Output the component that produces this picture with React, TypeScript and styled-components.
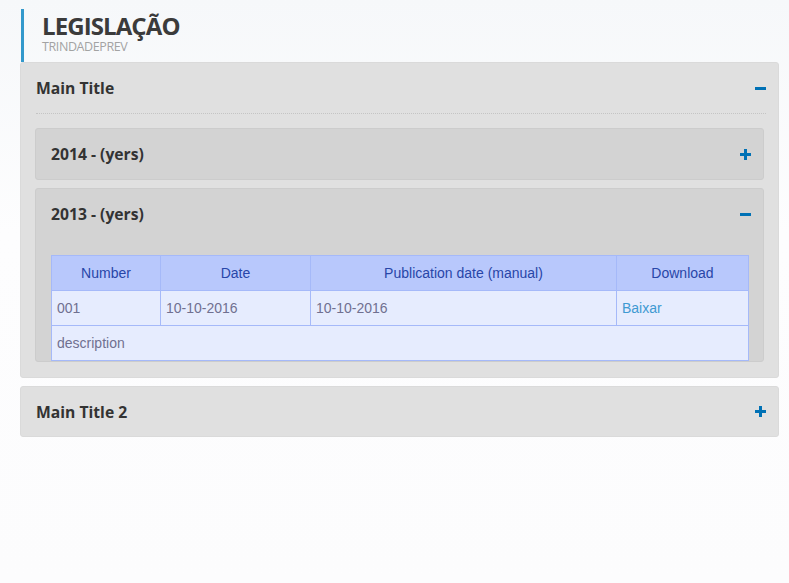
import * as React from "react";
import styled, { createGlobalStyle } from "styled-components";

const GlobalStyle = createGlobalStyle`
  html, body {
    margin: 0;
    padding: 0;
    background: #fbfcfd;
  }
  body {
    font-family: "Open Sans", "Liberation Sans", sans-serif;
  }
`;

const Page = styled.div`
  min-height: 583px;
  padding: 9px 10px 20px 20px;
  box-sizing: border-box;
  background: linear-gradient(180deg, #f6f8fa 0%, #fdfdfe 40%, #fcfcfd 100%);
`;

const PageHeader = styled.div`
  margin-left: 1px;
  border-left: 3px solid #3399cc;
  height: 53px;
  padding: 5px 0 0 18px;
  box-sizing: border-box;
`;

const PageTitle = styled.h1`
  margin: 0;
  font-family: "Open Sans", sans-serif;
  font-weight: 700;
  font-size: 24px;
  line-height: 24px;
  letter-spacing: -0.9px;
  color: #3b3b3b;
`;

const PageSub = styled.div`
  margin-top: 2px;
  font-size: 12.5px;
  line-height: 13px;
  color: #a3a3a3;
  letter-spacing: -0.4px;
`;

const Panel = styled.div<{ $inner?: boolean }>`
  background: ${(p) => (p.$inner ? "#d3d3d3" : "#e0e0e0")};
  border: 1px solid ${(p) => (p.$inner ? "#cccccc" : "#dadada")};
  border-radius: 3px;
  margin-bottom: 8px;
  &:last-child {
    margin-bottom: 0;
  }
`;

const PanelHead = styled.div<{ $divider?: boolean; $h: number }>`
  display: flex;
  align-items: center;
  justify-content: space-between;
  height: ${(p) => p.$h}px;
  margin: 0 12px 0 15px;
  border-bottom: ${(p) => (p.$divider ? "1px dotted #c4c4c4" : "none")};
  box-sizing: border-box;
`;

const PanelTitle = styled.span`
  font-weight: 700;
  font-size: 15.7px;
  color: #333333;
`;

const PanelBody = styled.div<{ $pad: string }>`
  padding: ${(p) => p.$pad};
`;

const ToggleBox = styled.span`
  position: relative;
  width: 11px;
  height: 11px;
  display: inline-block;
`;

const Bar = styled.span<{ $vertical?: boolean }>`
  position: absolute;
  background: #0071b5;
  ${(p) =>
    p.$vertical
      ? "left: 4px; top: 0; width: 3px; height: 11px;"
      : "left: 0; top: 4px; width: 11px; height: 3px;"}
`;

const Toggle: React.FC<{ open: boolean }> = ({ open }) => (
  <ToggleBox>
    <Bar />
    {!open && <Bar $vertical />}
  </ToggleBox>
);

const Table = styled.table`
  width: 100%;
  border-collapse: collapse;
  table-layout: fixed;
  font-family: "Liberation Sans", Arial, sans-serif;
  font-size: 14px;
`;

const Th = styled.th`
  background: #b8c8fc;
  border: 1px solid #a5b9f9;
  color: #2846a8;
  font-weight: 400;
  height: 35px;
  padding: 0 5px;
  box-sizing: border-box;
`;

const Td = styled.td`
  background: #e6ecfe;
  border: 1px solid #a5b9f9;
  color: #707090;
  height: 35px;
  padding: 0 5px;
  box-sizing: border-box;
`;

const Link = styled.a`
  color: #3f9ad2;
  text-decoration: none;
`;

export default function App() {
  return (
    <>
      <GlobalStyle />
      <Page>
        <PageHeader>
          <PageTitle>LEGISLAÇÃO</PageTitle>
          <PageSub>TRINDADEPREV</PageSub>
        </PageHeader>

        <Panel>
          <PanelHead $divider $h={51}>
            <PanelTitle>Main Title</PanelTitle>
            <Toggle open />
          </PanelHead>
          <PanelBody $pad="14px 14px 15px 14px">
            <Panel $inner>
              <PanelHead $h={50}>
                <PanelTitle>2014 - (yers)</PanelTitle>
                <Toggle open={false} />
              </PanelHead>
            </Panel>
            <Panel $inner>
              <PanelHead $h={50}>
                <PanelTitle>2013 - (yers)</PanelTitle>
                <Toggle open />
              </PanelHead>
              <PanelBody $pad="16px 15px 0 15px">
                <Table>
                  <colgroup>
                    <col style={{ width: 109 }} />
                    <col style={{ width: 150 }} />
                    <col style={{ width: 306 }} />
                    <col style={{ width: 132 }} />
                  </colgroup>
                  <thead>
                    <tr>
                      <Th>Number</Th>
                      <Th>Date</Th>
                      <Th>Publication date (manual)</Th>
                      <Th>Download</Th>
                    </tr>
                  </thead>
                  <tbody>
                    <tr>
                      <Td>001</Td>
                      <Td>10-10-2016</Td>
                      <Td>10-10-2016</Td>
                      <Td>
                        <Link href="#">Baixar</Link>
                      </Td>
                    </tr>
                    <tr>
                      <Td colSpan={4}>description</Td>
                    </tr>
                  </tbody>
                </Table>
              </PanelBody>
            </Panel>
          </PanelBody>
        </Panel>

        <Panel>
          <PanelHead $h={49}>
            <PanelTitle>Main Title 2</PanelTitle>
            <Toggle open={false} />
          </PanelHead>
        </Panel>
      </Page>
    </>
  );
}
